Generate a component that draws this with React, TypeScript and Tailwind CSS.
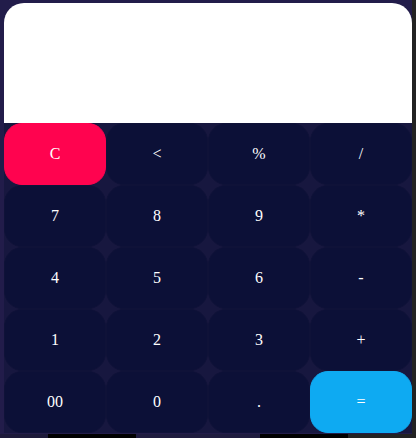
import React, { useState } from 'react';

const keys = ['C', '<', '%', '/', '7', '8', '9', '*', '4', '5', '6', '-', '1', '2', '3', '+', '00', '0', '.', '='];

const Calculator: React.FC = () => {
  const [value, setValue] = useState('');

  const press = (k: string) => {
    if (k === 'C') return setValue('');
    if (k === '<') return setValue((v) => v.slice(0, -1));
    if (k === '=') {
      try {
        // eslint-disable-next-line no-new-func
        setValue(String(Function(`return (${value || 0})`)()));
      } catch {
        setValue('Error');
      }
      return;
    }
    setValue((v) => v + k);
  };

  return (
    <div className="flex flex-col w-[408px] h-[430px] mt-[3px] ml-[4px]">
      <div className="h-[120px] bg-white rounded-t-[20px] flex items-end justify-end px-5 pb-3 text-4xl text-[#0c1037] font-['Liberation_Serif',serif]">
        {value}
      </div>
      <div className="grid grid-cols-4 grid-rows-5 flex-1 bg-[#17173f]">
        {keys.map((k) => {
          const color =
            k === 'C'
              ? 'bg-[#ff034f] border-[#ff034f]'
              : k === '='
              ? 'bg-[#0eaaf2] border-[#0eaaf2]'
              : 'bg-[#0c1037] border-[#0f1238]';
          return (
            <button
              key={k}
              onClick={() => press(k)}
              className={`${color} border rounded-[18px] text-white text-base font-['Liberation_Serif',serif] flex items-center justify-center`}
            >
              {k}
            </button>
          );
        })}
      </div>
    </div>
  );
};

export default function App() {
  return (
    <div className="w-[416px] h-[438px] bg-[#221c4a] relative overflow-hidden flex">
      <div className="flex-1 flex flex-col">
        <Calculator />
        <div className="flex h-[4px] mt-[1px]">
          <div className="w-[48px] bg-[#1d1a3a]" />
          <div className="w-[88px] bg-black" />
          <div className="w-[124px] bg-[#1f1c3f]" />
          <div className="w-[88px] bg-black" />
          <div className="flex-1 bg-[#222]" />
        </div>
      </div>
      <div className="w-[4px] bg-[#222222]" />
    </div>
  );
}
